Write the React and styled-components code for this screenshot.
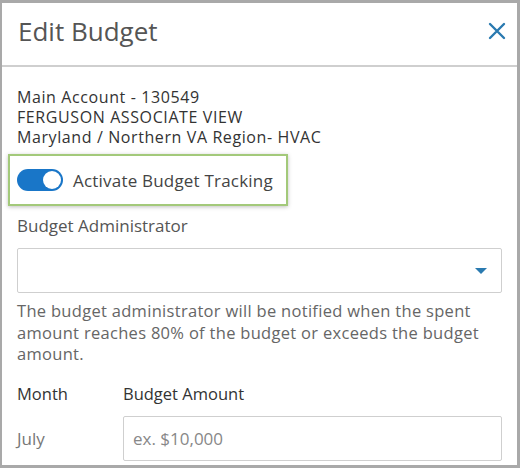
import React from "react";
import styled, { createGlobalStyle } from "styled-components";

const Global = createGlobalStyle`
  html, body { margin: 0; padding: 0; background: #fff; }
  body { font-family: "Open Sans", "Liberation Sans", sans-serif; }
  * { box-sizing: border-box; }
`;

const Frame = styled.div`
  width: 520px;
  height: 468px;
  border: 3px solid #a9a9a9;
  border-left-width: 2px;
  background: #fff;
  overflow: hidden;
`;

const Header = styled.div`
  height: 64px;
  display: flex;
  align-items: center;
  justify-content: space-between;
  padding: 0 8px 6px 16px;
  border-bottom: 2px solid #cfcfcf;
`;

const Title = styled.h1`
  margin: 0;
  font-size: 26px;
  font-weight: 400;
  color: #555;
`;

const CloseButton = styled.button`
  border: 0;
  background: none;
  padding: 0;
  width: 24px;
  height: 24px;
  display: flex;
  align-items: center;
  justify-content: center;
  cursor: pointer;
`;

const Body = styled.div`
  padding: 20px 15px 0 15px;
  display: flex;
  flex-direction: column;
`;

const AccountInfo = styled.div`
  font-size: 16px;
  letter-spacing: 0.6px;
  line-height: 20px;
  color: #333;
`;

const Highlight = styled.div`
  margin: 7px 0 0 -9px;
  width: 280px;
  height: 52px;
  border: 2px solid #a3c97a;
  box-shadow: 0 1px 4px rgba(0, 0, 0, 0.25);
  display: flex;
  align-items: center;
  gap: 10px;
  padding-left: 7px;
`;

const Toggle = styled.span`
  width: 46px;
  height: 22px;
  border-radius: 11px;
  background: ${({ on }) => (on ? "#1976c8" : "#ccc")};
  display: flex;
  align-items: center;
  justify-content: ${({ on }) => (on ? "flex-end" : "flex-start")};
  padding: 2px;
  &::after {
    content: "";
    width: 18px;
    height: 18px;
    border-radius: 50%;
    background: #fff;
  }
`;

const ToggleLabel = styled.span`
  font-size: 17px;
  letter-spacing: 0.2px;
  color: #444;
`;

const FieldLabel = styled.label`
  display: block;
  font-size: 17px;
  color: #555;
  margin-top: 9px;
  line-height: 22px;
`;

const Select = styled.div`
  margin-top: 11px;
  height: 45px;
  border: 1px solid #cfcfcf;
  border-radius: 2px;
  display: flex;
  align-items: center;
  justify-content: flex-end;
  padding-right: 14px;
`;

const Arrow = styled.span`
  width: 0;
  height: 0;
  border-left: 6px solid transparent;
  border-right: 6px solid transparent;
  border-top: 6px solid #2a7ab0;
`;

const Help = styled.p`
  margin: 7px 0 0 0;
  font-size: 16.5px;
  letter-spacing: 0.3px;
  line-height: 21.5px;
  color: #666;
`;

const Grid = styled.div`
  margin-top: 17px;
  display: grid;
  grid-template-columns: 106px 1fr;
  row-gap: 11px;
  align-items: center;
`;

const ColHead = styled.span`
  font-size: 16.5px;
  font-weight: 500;
  color: #333;
`;

const MonthName = styled.span`
  font-size: 17px;
  color: #777;
`;

const AmountInput = styled.input`
  height: 45px;
  border: 1px solid #cfcfcf;
  border-radius: 2px;
  padding: 0 9px;
  font-family: inherit;
  font-size: 17px;
  color: #333;
  outline: none;
  &::placeholder { color: #888; }
`;

export default function App() {
  return (
    <>
      <Global />
      <Frame>
        <Header>
          <Title>Edit Budget</Title>
          <CloseButton aria-label="Close">
            <svg width="20" height="20" viewBox="0 0 20 20">
              <path d="M3 3 L17 17 M17 3 L3 17" stroke="#2a7ab0" strokeWidth="2.4" strokeLinecap="round" />
            </svg>
          </CloseButton>
        </Header>
        <Body>
          <AccountInfo>
            Main Account - 130549
            <br />
            FERGUSON ASSOCIATE VIEW
            <br />
            Maryland / Northern VA Region- HVAC
          </AccountInfo>
          <Highlight>
            <Toggle on />
            <ToggleLabel>Activate Budget Tracking</ToggleLabel>
          </Highlight>
          <FieldLabel>Budget Administrator</FieldLabel>
          <Select>
            <Arrow />
          </Select>
          <Help>
            The budget administrator will be notified when the spent amount reaches 80% of the budget or exceeds the budget amount.
          </Help>
          <Grid>
            <ColHead>Month</ColHead>
            <ColHead>Budget Amount</ColHead>
            <MonthName>July</MonthName>
            <AmountInput placeholder="ex. $10,000" />
          </Grid>
        </Body>
      </Frame>
    </>
  );
}
